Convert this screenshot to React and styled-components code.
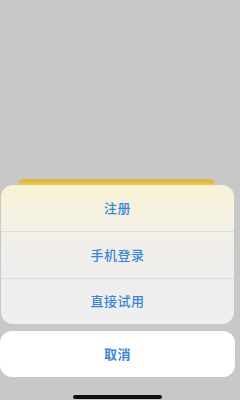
import React from "react";
import styled, { createGlobalStyle } from "styled-components";

const GlobalStyle = createGlobalStyle`
  html, body {
    margin: 0;
    padding: 0;
    height: 100%;
  }
  body {
    font-family: "PingFang SC", "Noto Sans CJK SC", "Noto Sans", sans-serif;
  }
  #root {
    height: 100%;
  }
`;

const Screen = styled.main`
  height: 100vh;
  background: #c8c8c8;
  display: flex;
  flex-direction: column;
  justify-content: flex-end;
  overflow: hidden;
`;

const Backdrop = styled.div`
  margin: 0 25px 0 18px;
  height: 6px;
  border-radius: 6px 6px 0 0;
  background: linear-gradient(180deg, #d9b43a 0%, #e6c655 100%);
`;

const Group = styled.section`
  margin: 0 6px 0 1px;
  border-radius: 12px;
  overflow: hidden;
  background: linear-gradient(180deg, #f9f2d4 0%, #f3f0e6 30%, #efeeec 55%, #efefef 100%);
`;

const Action = styled.button`
  display: flex;
  align-items: center;
  justify-content: center;
  width: 100%;
  height: ${(p) => p.$h || 46}px;
  border: 0;
  border-top: ${(p) => (p.$first ? "0" : "1px solid #dcdcda")};
  background: transparent;
  color: #3a86d4;
  font-family: inherit;
  font-size: 13px;
  font-weight: 500;
  letter-spacing: 0.5px;
  padding: 0 0 2px;
`;

const Cancel = styled(Action)`
  margin: 7px 5px 0 0;
  width: auto;
  border-top: 0;
  border-radius: 12px;
  background: #ffffff;
  font-weight: 600;
`;

const HomeBar = styled.div`
  align-self: center;
  margin: 18px 0 1px -6px;
  width: 89px;
  height: 4px;
  border-radius: 3px;
  background: #111;
`;

const actions = ["注册", "手机登录", "直接试用"];

const App = () => {
  return (
    <>
      <GlobalStyle />
      <Screen>
        <Backdrop />
        <Group>
          {actions.map((label, i) => (
            <Action key={label} $first={i === 0} $h={i === 1 ? 47 : 46}>
              {label}
            </Action>
          ))}
        </Group>
        <Cancel>取消</Cancel>
        <HomeBar />
      </Screen>
    </>
  );
};

export default App;
